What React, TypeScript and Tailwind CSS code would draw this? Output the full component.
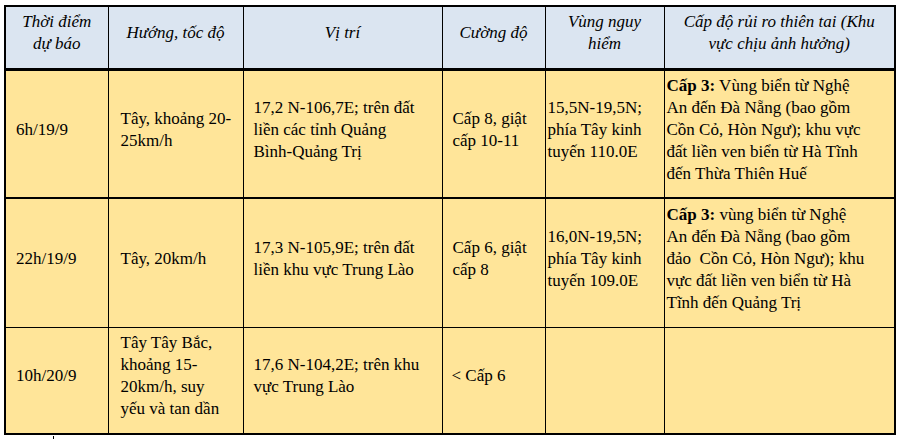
type Cell = { lines: string[]; bold?: string; pad: string };

const head: string[][] = [
  ['Thời điểm', 'dự báo'],
  ['Hướng, tốc độ'],
  ['Vị trí'],
  ['Cường độ'],
  ['Vùng nguy', 'hiểm'],
  ['Cấp độ rủi ro thiên tai (Khu', 'vực chịu ảnh hưởng)'],
];

const rows: { h: string; line: string; cells: Cell[] }[] = [
  {
    h: 'h-[129px]',
    line: 'border-b-2',
    cells: [
      { lines: ['6h/19/9'], pad: 'pl-[10px]' },
      { lines: ['Tây, khoảng 20-', '25km/h'], pad: 'pl-[12px]' },
      { lines: ['17,2 N-106,7E; trên đất', 'liền các tỉnh Quảng', 'Bình-Quảng Trị'], pad: 'pl-[10px]' },
      { lines: ['Cấp 8, giật', 'cấp 10-11'], pad: 'pl-[10px]' },
      { lines: ['15,5N-19,5N;', 'phía Tây kinh', 'tuyến 110.0E'], pad: 'pl-[2px]' },
      {
        bold: 'Cấp 3:',
        lines: [
          ' Vùng biển từ Nghệ',
          'An đến Đà Nẵng (bao gồm',
          'Cồn Cỏ, Hòn Ngư); khu vực',
          'đất liền ven biển từ Hà Tĩnh',
          'đến Thừa Thiên Huế',
        ],
        pad: 'pl-[2px]',
      },
    ],
  },
  {
    h: 'h-[129px]',
    line: 'border-b',
    cells: [
      { lines: ['22h/19/9'], pad: 'pl-[10px]' },
      { lines: ['Tây, 20km/h'], pad: 'pl-[12px]' },
      { lines: ['17,3 N-105,9E; trên đất', 'liền khu vực Trung Lào'], pad: 'pl-[10px]' },
      { lines: ['Cấp 6, giật', 'cấp 8'], pad: 'pl-[10px]' },
      { lines: ['16,0N-19,5N;', 'phía Tây kinh', 'tuyến 109.0E'], pad: 'pl-[2px]' },
      {
        bold: 'Cấp 3:',
        lines: [
          ' vùng biển từ Nghệ',
          'An đến Đà Nẵng (bao gồm',
          'đảo  Cồn Cỏ, Hòn Ngư); khu',
          'vực đất liền ven biển từ Hà',
          'Tĩnh đến Quảng Trị',
        ],
        pad: 'pl-[2px]',
      },
    ],
  },
  {
    h: 'h-[107px]',
    line: '',
    cells: [
      { lines: ['10h/20/9'], pad: 'pl-[10px]' },
      { lines: ['Tây Tây Bắc,', 'khoảng 15-', '20km/h, suy', 'yếu và tan dần'], pad: 'pl-[12px]' },
      { lines: ['17,6 N-104,2E; trên khu', 'vực Trung Lào'], pad: 'pl-[10px]' },
      { lines: ['< Cấp 6'], pad: 'pl-[9px]' },
      { lines: [], pad: 'pl-[2px]' },
      { lines: [], pad: 'pl-[2px]' },
    ],
  },
];

export default function App() {
  return (
    <div className="h-[439px] w-[899px] overflow-hidden bg-white pl-[4px] pt-[5px] font-['Liberation_Serif',serif] text-black">
      <table className="table-fixed border-collapse border-2 border-black font-['Liberation_Serif',serif] text-[17px] leading-[22px]">
        <colgroup>
          <col className="w-[103px]" />
          <col className="w-[135px]" />
          <col className="w-[199px]" />
          <col className="w-[103px]" />
          <col className="w-[119px]" />
          <col className="w-[231px]" />
        </colgroup>
        <thead>
          <tr className="h-[63px] border-b-[3px] border-black bg-[#dbe5f1]">
            {head.map((lines, i) => (
              <th key={i} className="border-x border-black px-1 pb-[8px] text-center align-middle font-normal italic">
                {lines.map((l, j) => (
                  <div key={j} className="whitespace-nowrap">
                    {l}
                  </div>
                ))}
              </th>
            ))}
          </tr>
        </thead>
        <tbody>
          {rows.map((r, i) => (
            <tr key={i} className={`${r.h} ${r.line} border-black bg-[#ffe599]`}>
              {r.cells.map((c, j) => (
                <td key={j} className={`border-x border-black ${c.pad} pb-[8px] align-middle`}>
                  {c.lines.map((l, k) => (
                    <div key={k} className="whitespace-pre">
                      {k === 0 && c.bold ? <b>{c.bold}</b> : null}
                      {l}
                    </div>
                  ))}
                </td>
              ))}
            </tr>
          ))}
        </tbody>
      </table>
      {/* text cursor left under the table */}
      <div className="ml-[49px] mt-[1px] h-[6px] w-px bg-black" />
    </div>
  );
}
